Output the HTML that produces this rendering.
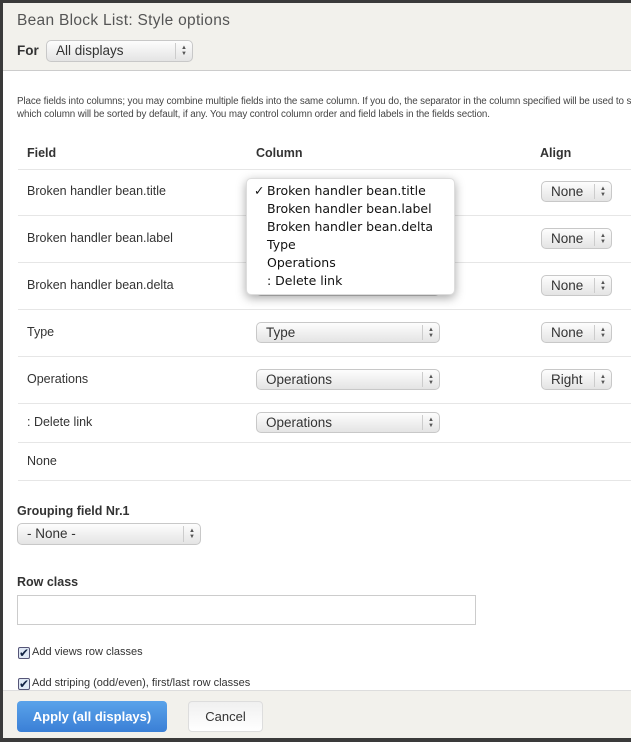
<!DOCTYPE html>
<html><head><style>
*{box-sizing:border-box;margin:0;padding:0}
body{width:631px;height:742px;background:#3a3a3a;position:relative;overflow:hidden;font-family:"Liberation Sans",sans-serif;color:#333}
.modal{position:absolute;left:3px;top:3px;width:628px;height:735px;background:#fff;overflow:hidden}
.hdr{position:absolute;left:0;top:0;width:100%;height:68px;background:#f2f1ec;border-bottom:1px solid #ccc}
.ab{position:absolute}
.t{font-size:12.5px;color:#333;white-space:nowrap}
.sel{position:absolute;height:21px;border:1px solid #c8c8c8;border-radius:5px;background:linear-gradient(#fdfdfd,#e4e4e4);font-size:13.5px;color:#333;padding-left:9px;line-height:19px;font-family:"Liberation Sans",sans-serif}
.sel:after{content:"";position:absolute;right:16px;top:2px;bottom:2px;border-left:1px solid #ccc}
.sel i{position:absolute;right:5px;top:4px;font-style:normal;font-size:6px;line-height:6px;color:#555;text-align:center}
.line{position:absolute;left:15px;width:620px;height:1px;background:#e6e6e6}
.b{font-weight:bold}
</style></head><body>
<div class="modal">
<div class="hdr">
<div class="ab" style="left:14px;top:9px;font-size:15.5px;color:#555;letter-spacing:.3px">Bean Block List: Style options</div>
<div class="ab b t" style="left:14px;top:40px;font-size:13.5px">For</div>
<div class="sel" style="left:43px;top:37px;width:147px;height:22px">All displays<i>▲<br>▼</i></div>
</div>
<div class="ab" style="left:14px;top:92px;font-size:9.8px;color:#444;line-height:13px;white-space:nowrap;letter-spacing:-.1px">Place fields into columns; you may combine multiple fields into the same column. If you do, the separator in the column specified will be used to separate the fields.<br>which column will be sorted by default, if any. You may control column order and field labels in the fields section.</div>
<div class="ab b t" style="left:24px;top:143px">Field</div>
<div class="ab b t" style="left:253px;top:143px">Column</div>
<div class="ab b t" style="left:537px;top:143px">Align</div>
<div class="line" style="top:166px"></div>
<div class="ab t" style="left:24px;top:181px">Broken handler bean.title</div>
<div class="line" style="top:212px"></div>
<div class="ab t" style="left:24px;top:228px">Broken handler bean.label</div>
<div class="line" style="top:259px"></div>
<div class="ab t" style="left:24px;top:275px">Broken handler bean.delta</div>
<div class="line" style="top:306px"></div>
<div class="ab t" style="left:24px;top:322px">Type</div>
<div class="line" style="top:353px"></div>
<div class="ab t" style="left:24px;top:369px">Operations</div>
<div class="line" style="top:400px"></div>
<div class="ab t" style="left:24px;top:412px">: Delete link</div>
<div class="line" style="top:439px"></div>
<div class="ab t" style="left:24px;top:451px">None</div>
<div class="line" style="top:477px"></div>

<div class="sel" style="left:253px;top:178px;width:184px">Broken handler bean.title<i>▲<br>▼</i></div>
<div class="sel" style="left:253px;top:225px;width:184px">Broken handler bean.label<i>▲<br>▼</i></div>
<div class="sel" style="left:253px;top:272px;width:184px">Broken handler bean.delta<i>▲<br>▼</i></div>
<div class="sel" style="left:253px;top:319px;width:184px">Type<i>▲<br>▼</i></div>
<div class="sel" style="left:253px;top:366px;width:184px">Operations<i>▲<br>▼</i></div>
<div class="sel" style="left:253px;top:409px;width:184px">Operations<i>▲<br>▼</i></div>
<div class="sel" style="left:538px;top:178px;width:71px">None<i>▲<br>▼</i></div>
<div class="sel" style="left:538px;top:225px;width:71px">None<i>▲<br>▼</i></div>
<div class="sel" style="left:538px;top:272px;width:71px">None<i>▲<br>▼</i></div>
<div class="sel" style="left:538px;top:319px;width:71px">None<i>▲<br>▼</i></div>
<div class="sel" style="left:538px;top:366px;width:71px">Right<i>▲<br>▼</i></div>

<div class="ab" style="left:243px;top:175px;width:209px;height:117px;background:#fff;border-radius:5px;box-shadow:0 3px 10px rgba(0,0,0,.35);border:1px solid #ddd;font-family:'DejaVu Sans',sans-serif;font-size:12.5px;color:#111;line-height:18px;padding:3px 0 0 20px">
<span class="ab" style="left:7px;top:3px">✓</span>Broken handler bean.title<br>Broken handler bean.label<br>Broken handler bean.delta<br>Type<br>Operations<br>: Delete link</div>

<div class="ab b t" style="left:14px;top:501px">Grouping field Nr.1</div>
<div class="sel" style="left:14px;top:520px;width:184px;height:22px">- None -<i>▲<br>▼</i></div>
<div class="ab b t" style="left:14px;top:572px">Row class</div>
<div class="ab" style="left:14px;top:592px;width:459px;height:30px;border:1px solid #ccc"></div>
<div class="ab" style="left:15px;top:644px;width:12px;height:12px;border:1px solid #557;border-radius:2px;background:#dfe8f5;font-size:12px;line-height:10px;color:#124">✔</div>
<div class="ab" style="left:29px;top:643px;font-size:11px;color:#333">Add views row classes</div>
<div class="ab" style="left:15px;top:675px;width:12px;height:12px;border:1px solid #557;border-radius:2px;background:#dfe8f5;font-size:12px;line-height:10px;color:#124">✔</div>
<div class="ab" style="left:29px;top:674px;font-size:11px;color:#333">Add striping (odd/even), first/last row classes</div>
<div class="ab" style="left:0;top:687px;width:100%;height:48px;background:#f2f1ec;border-top:1px solid #ddd">
<div class="ab b" style="left:14px;top:10px;width:150px;height:31px;border-radius:4px;background:linear-gradient(#5aa3ea,#3a7fd6);color:#fff;font-size:13px;text-align:center;line-height:31px">Apply (all displays)</div>
<div class="ab" style="left:185px;top:10px;width:75px;height:31px;border-radius:4px;border:1px solid #ddd;background:linear-gradient(#f0f0f0,#fff);color:#333;font-size:13px;text-align:center;line-height:29px">Cancel</div>
</div>
</div>
</body></html>
